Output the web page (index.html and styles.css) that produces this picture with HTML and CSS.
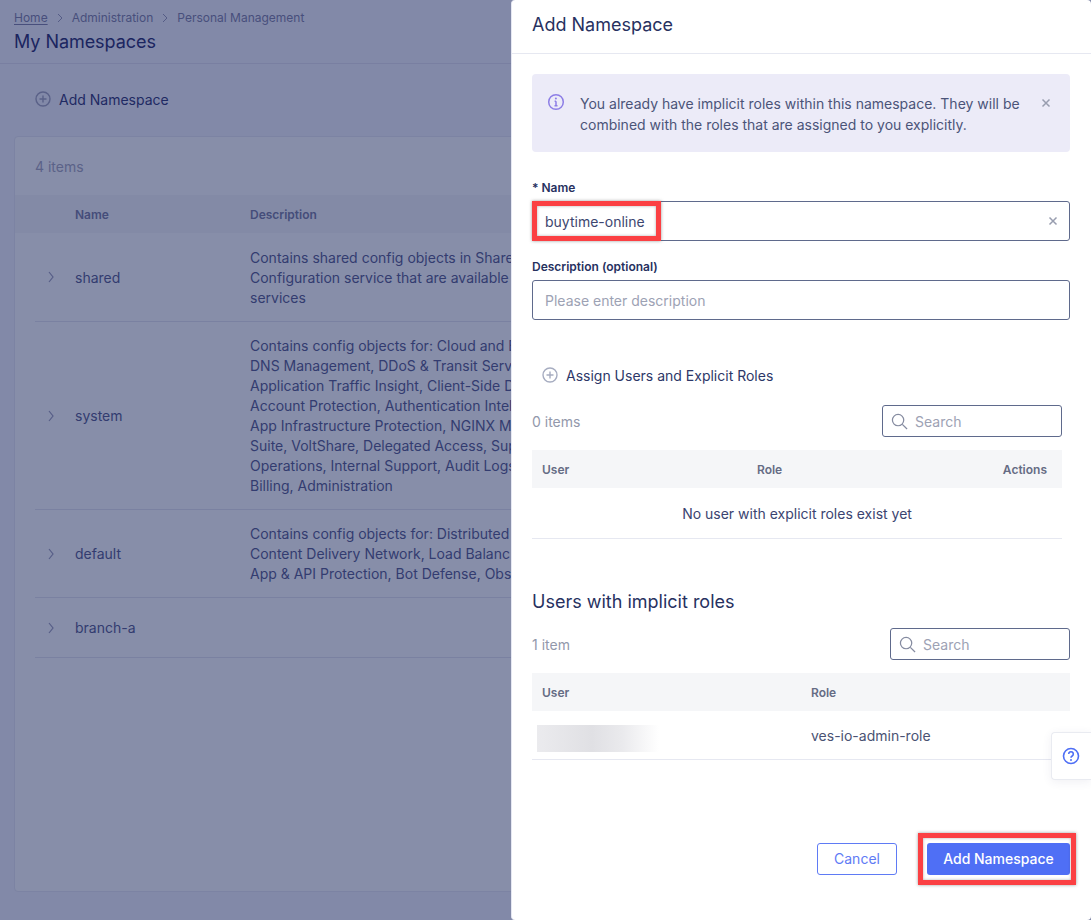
FILE: index.html
```html
<!DOCTYPE html>
<html lang="en">
<head>
<meta charset="utf-8">
<title>My Namespaces</title>
<link rel="stylesheet" href="styles.css">
</head>
<body>
<div class="screen">
  <main class="page">
    <header class="page-head">
      <nav class="crumbs">
        <a class="crumb-home">Home</a>
        <svg class="crumb-sep" viewBox="0 0 8 10"><path d="M2 1l4 4-4 4"/></svg>
        <span>Administration</span>
        <svg class="crumb-sep" viewBox="0 0 8 10"><path d="M2 1l4 4-4 4"/></svg>
        <span>Personal Management</span>
      </nav>
      <h1 class="page-title">My Namespaces</h1>
    </header>
    <div class="page-action">
      <svg class="plus-icon dim" viewBox="0 0 16 16"><circle cx="8" cy="8" r="7"/><path d="M8 4.500v7M4.500 8h7"/></svg>
      <span>Add Namespace</span>
    </div>
    <section class="card">
      <div class="card-count">4 items</div>
      <div class="ns-head"><span class="col-chev"></span><span class="col-name">Name</span><span>Description</span></div>
      <div class="ns-row r1">
        <svg class="chev" viewBox="0 0 8 14"><path d="M2 2l4 5-4 5"/></svg>
        <span class="col-name">shared</span>
        <p class="ns-desc">Contains shared config objects in Share<br>Configuration service that are available<br>services</p>
      </div>
      <div class="ns-row r2">
        <svg class="chev" viewBox="0 0 8 14"><path d="M2 2l4 5-4 5"/></svg>
        <span class="col-name">system</span>
        <p class="ns-desc">Contains config objects for: Cloud and E<br>DNS Management, DDoS &amp; Transit Serv<br>Application Traffic Insight, Client-Side D<br>Account Protection, Authentication Intel<br>App Infrastructure Protection, NGINX M<br>Suite, VoltShare, Delegated Access, Sup<br>Operations, Internal Support, Audit Logs<br>Billing, Administration</p>
      </div>
      <div class="ns-row r3">
        <svg class="chev" viewBox="0 0 8 14"><path d="M2 2l4 5-4 5"/></svg>
        <span class="col-name">default</span>
        <p class="ns-desc">Contains config objects for: Distributed<br>Content Delivery Network, Load Balanc<br>App &amp; API Protection, Bot Defense, Obs</p>
      </div>
      <div class="ns-row r4">
        <svg class="chev" viewBox="0 0 8 14"><path d="M2 2l4 5-4 5"/></svg>
        <span class="col-name">branch-a</span>
      </div>
    </section>
  </main>

  <aside class="modal">
    <div class="modal-head">Add Namespace</div>
    <div class="modal-body">
      <div class="alert">
        <svg class="info-icon" viewBox="0 0 18 18"><circle cx="9" cy="9" r="7.300"/><path d="M9 8.200v4.600M7.600 8.200H9M7.500 12.800h3"/><circle class="dot" cx="8.900" cy="5.600" r="1"/></svg>
        <p class="alert-text">You already have implicit roles within this namespace. They will be combined with the roles that are assigned to you explicitly.</p>
        <svg class="x-icon alert-x" viewBox="0 0 10 10"><path d="M1.500 1.500l7 7M8.500 1.500l-7 7"/></svg>
      </div>

      <label class="field-label first">* Name</label>
      <div class="input-box">
        <input class="text-input" type="text" value="buytime-online">
        <svg class="x-icon" viewBox="0 0 10 10"><path d="M1.500 1.500l7 7M8.500 1.500l-7 7"/></svg>
        <span class="mark mark-name"></span>
      </div>

      <label class="field-label">Description (optional)</label>
      <div class="input-box">
        <input class="text-input" type="text" placeholder="Please enter description">
      </div>

      <div class="assign">
        <svg class="plus-icon" viewBox="0 0 16 16"><circle cx="8" cy="8" r="7"/><path d="M8 4.500v7M4.500 8h7"/></svg>
        <span>Assign Users and Explicit Roles</span>
      </div>

      <div class="toolbar narrow">
        <span class="count">0 items</span>
        <div class="search">
          <svg class="search-icon" viewBox="0 0 18 18"><circle cx="7.500" cy="7.500" r="6"/><path d="M12 12l5 5"/></svg>
          <span>Search</span>
        </div>
      </div>
      <div class="table narrow">
        <div class="thead t-explicit"><span>User</span><span>Role</span><span class="right">Actions</span></div>
        <div class="empty">No user with explicit roles exist yet</div>
      </div>

      <h2 class="section-title">Users with implicit roles</h2>

      <div class="toolbar">
        <span class="count">1 item</span>
        <div class="search">
          <svg class="search-icon" viewBox="0 0 18 18"><circle cx="7.500" cy="7.500" r="6"/><path d="M12 12l5 5"/></svg>
          <span>Search</span>
        </div>
      </div>
      <div class="table">
        <div class="thead t-implicit"><span>User</span><span>Role</span></div>
        <div class="trow t-implicit"><span class="blurred"></span><span>ves-io-admin-role</span></div>
      </div>

      <div class="actions">
        <button class="btn btn-ghost" type="button">Cancel</button>
        <button class="btn btn-primary" type="button">Add Namespace<span class="mark mark-btn"></span></button>
      </div>
    </div>
    <div class="help-tab">
      <svg class="help-icon" viewBox="0 0 18 18"><circle cx="9" cy="9" r="7.500"/><path d="M6.700 7a2.300 2.300 0 1 1 3.500 2c-.8.500-1.200.9-1.200 1.700"/><circle class="dot" cx="9" cy="13" r="1"/></svg>
    </div>
  </aside>
</div>
</body>
</html>
```
FILE: styles.css
```css
* { box-sizing: border-box; }
html, body { margin: 0; height: 100%; }
body {
  font-family: Inter, "Liberation Sans", sans-serif;
  font-size: 14px;
  color: #2a3468;
  background: #8289a8;
  overflow: hidden;
}
.screen { display: flex; width: 1091px; height: 920px; overflow: hidden; }

/* dimmed page */
.page { width: 511px; flex: none; overflow: hidden; display: flex; flex-direction: column; background: #8289a8; }
.page-head { height: 64px; padding: 10px 14px 0; border-bottom: 1px solid #797fa1; flex: none; }
.crumbs { display: flex; align-items: center; height: 16px; font-size: 12px; line-height: 16px; color: #484f7c; white-space: nowrap; }
.crumb-home { text-decoration: underline; text-underline-offset: 2px; }
.crumb-sep { width: 8px; height: 10px; margin: 0 8px; fill: none; stroke: #555c86; stroke-width: 1; }
.page-title { margin: 4px 0 0; font-size: 18px; line-height: 24px; font-weight: 400; letter-spacing: -.05px; color: #1b2560; white-space: nowrap; }
.page-action { height: 72px; flex: none; display: flex; align-items: center; gap: 8px; padding: 0 0 2px 35px; color: #1f2a63; }
.plus-icon { width: 16px; height: 16px; flex: none; fill: none; stroke: #a6acc0; stroke-width: 1.400; }
.plus-icon.dim { stroke: #5a6188; }
.card {
  flex: 1; margin: 0 0 28px 14px; width: 700px;
  background: #878ea9; border: 1px solid #7c83a3; border-radius: 4px 0 0 4px;
}
.card-count { height: 58px; padding: 21px 0 0 20px; line-height: 18px; color: #5b6288; }
.ns-head { display: flex; align-items: center; height: 38px; background: #838aa6; font-size: 12px; font-weight: 600; color: #454d7a; }
.col-chev { width: 60px; flex: none; }
.col-name { width: 175px; flex: none; }
.ns-row { display: flex; align-items: center; margin-left: 20px; border-bottom: 1px solid #7a81a1; color: #333c70; white-space: nowrap; }
.chev { width: 8px; height: 14px; flex: none; margin: 0 20px 0 12px; fill: none; stroke: #565d87; stroke-width: 1.200; }
.ns-desc { margin: 0; line-height: 20px; }
.r1 { height: 89px; }
.r1 .ns-desc { margin-top: 2px; }
.r2 { height: 188px; }
.r3 { height: 88px; }
.r4 { height: 60px; }

/* drawer */
.modal {
  position: relative;
  width: 580px; flex: none; height: 920px;
  background: #fff; border-left: 1px solid #e5e7f2; border-radius: 4px;
  display: flex; flex-direction: column;
}
.modal-head { height: 54px; flex: none; padding: 14px 20px 0; font-size: 18px; line-height: 22px; color: #27315f; border-bottom: 1px solid #e6e8f1; }
.modal-body { padding: 20px 21px 0 20px; display: flex; flex-direction: column; flex: 1; }
.alert { height: 78px; flex: none; display: flex; align-items: flex-start; padding: 19px 16px 0 15px; background: #ecebf8; border-radius: 4px; }
.info-icon { width: 18px; height: 18px; flex: none; margin: 0 15px 0 0; fill: none; stroke: #8d7ee6; stroke-width: 1.500; }
.dot { stroke: none; }
.info-icon .dot { fill: #8d7ee6; }
.alert-text { margin: 0; width: 448px; line-height: 21px; color: #4b5478; }
.x-icon { width: 10px; height: 10px; flex: none; fill: none; stroke: #989daf; stroke-width: 1.500; }
.alert-x { margin: 5px 0 0 13px; }
.field-label { display: block; height: 16px; margin: 18px 0 5px; font-size: 12px; line-height: 16px; font-weight: 600; color: #27315f; }
.field-label.first { margin-top: 28px; }
.input-box {
  position: relative; height: 40px; flex: none; display: flex; align-items: center; padding-right: 11px;
  border: 1px solid #5f6a8c; border-radius: 3px; background: #fff;
}
.text-input { flex: 1; min-width: 0; height: 100%; border: 0; outline: 0; padding: 0 12px; background: transparent; font: inherit; color: #3d4670; }
.text-input::placeholder { color: #9da2b4; opacity: 1; }
.mark { position: absolute; border: 5px solid #fb4043; box-shadow: 0 0 3px rgba(60,60,60,.5), inset 0 0 3px rgba(60,60,60,.4); pointer-events: none; }
.mark-name { left: -1px; top: -1px; width: 129px; height: 40px; }
.mark-btn { left: -9px; top: -10px; width: 158px; height: 52px; }
.assign { display: flex; align-items: center; gap: 8px; height: 20px; margin: 45px 0 0 10px; color: #2d3768; }
.toolbar { display: flex; justify-content: space-between; align-items: center; height: 32px; flex: none; }
.toolbar.narrow { width: 530px; margin-top: 20px; }
.count { color: #9298ab; }
.search { width: 180px; height: 32px; display: flex; align-items: center; gap: 7px; padding-left: 8px; border: 1px solid #5f6a8c; border-radius: 3px; color: #9da2b4; }
.search-icon { width: 17px; height: 17px; flex: none; fill: none; stroke: #858ba0; stroke-width: 1.300; }
.table { margin-top: 13px; flex: none; }
.table.narrow { width: 530px; }
.thead { height: 38px; display: grid; align-items: center; padding: 0 15px 0 10px; background: #f5f6f8; font-size: 12px; font-weight: 600; color: #656c84; }
.t-explicit { grid-template-columns: 215px 1fr auto; }
.t-implicit { grid-template-columns: 269px 1fr; }
.right { text-align: right; }
.empty { height: 51px; display: flex; align-items: center; justify-content: center; color: #3b4470; border-bottom: 1px solid #e6e8f1; }
.trow { height: 49px; display: grid; align-items: center; padding: 0 15px 0 10px; color: #4a5273; border-bottom: 1px solid #e6e8f1; }
.blurred { display: block; width: 122px; height: 27px; margin: 7px 0 0 -5px; background: linear-gradient(90deg, #ebebee 0%, #e0e0e4 45%, #eaeaed 70%, #fff 100%); }
.section-title { margin: 52px 0 15px; font-size: 18px; line-height: 22px; font-weight: 400; color: #27315f; }
.actions { display: flex; justify-content: flex-end; gap: 30px; margin-top: 83px; }
.btn { position: relative; height: 32px; border-radius: 3px; font: inherit; padding: 0 0 2px; }
.btn-ghost { width: 80px; background: #fff; border: 1px solid #5f7bf5; color: #5f7bf5; }
.btn-primary { width: 143px; background: #4f6ff5; border: 0; color: #fff; font-weight: 500; }
.help-tab {
  position: absolute; right: 0; top: 732px; width: 40px; height: 48px;
  display: flex; align-items: center; padding-left: 10px;
  background: #fff; border: 1px solid #e9ebf1; border-right: 0; border-radius: 4px 0 0 4px;
  box-shadow: 0 2px 10px rgba(60,70,110,.08);
}
.help-icon { width: 18px; height: 18px; fill: none; stroke: #4f6ff5; stroke-width: 1.600; }
.help-icon .dot { fill: #4f6ff5; }
```
